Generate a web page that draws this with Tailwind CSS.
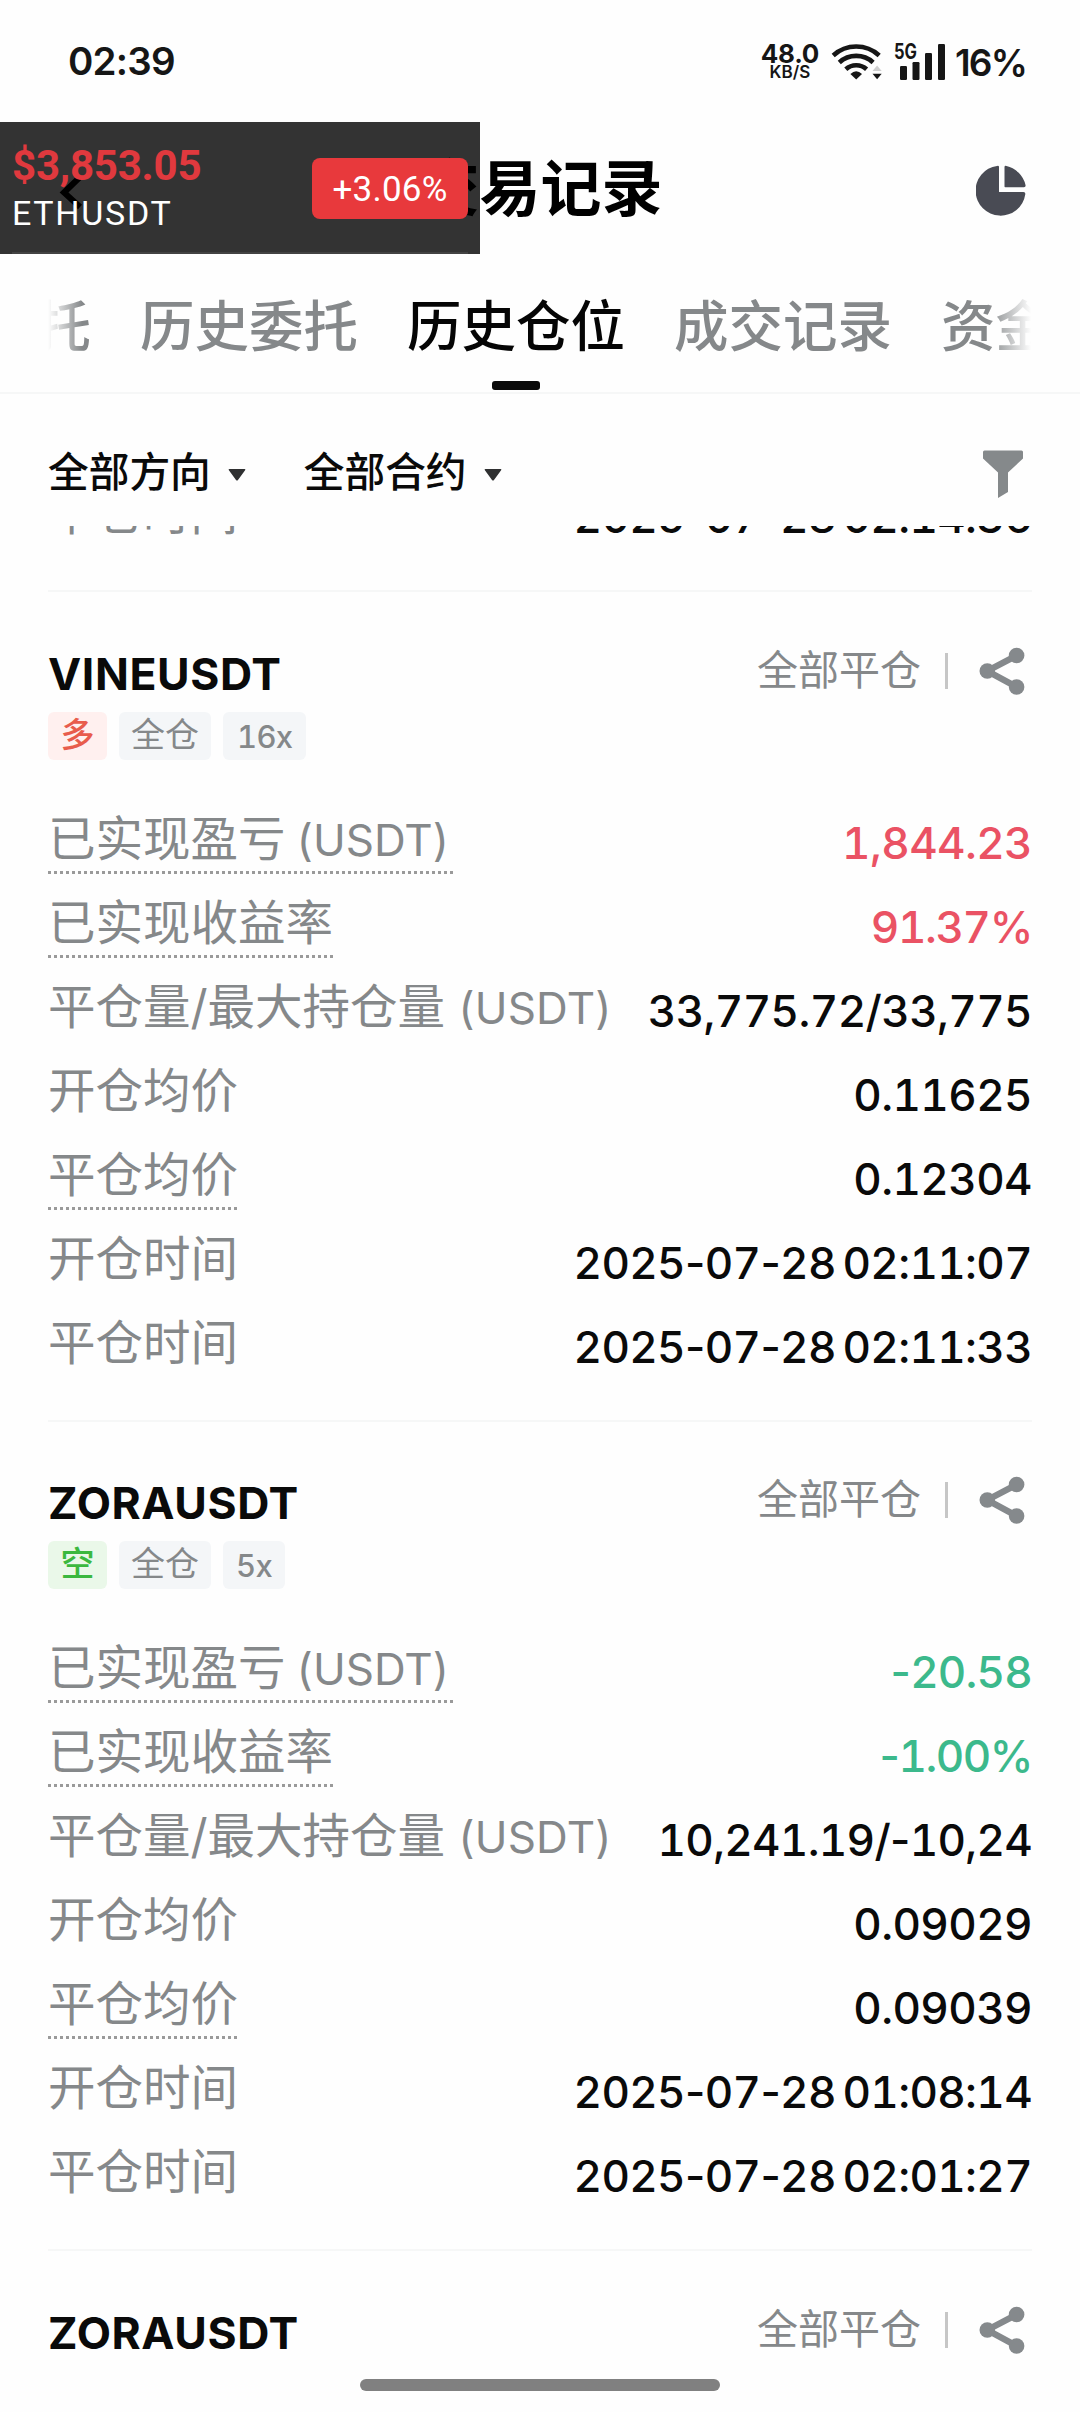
<!DOCTYPE html>
<html lang="zh-CN">
<head>
<meta charset="utf-8">
<title>交易记录</title>
<script src="https://cdn.jsdelivr.net/npm/@tailwindcss/browser@4"></script>
</head>
<body class="bg-white">
<div class="relative flex h-[2412px] w-[1080px] flex-col overflow-hidden bg-[#fefefe] font-['Inter','Noto_Sans_CJK_SC',sans-serif] text-[#0a0a0a]">

  <!-- Status bar -->
  <header class="flex h-[122px] shrink-0 items-start justify-between pl-[68px] pr-[54px] text-[#161616]">
    <span class="mt-[37px] text-[38.5px] leading-[48px] font-semibold tracking-[-0.8px]">02:39</span>
    <div class="flex">
      <div class="mt-[41px] flex w-[60px] flex-col items-center">
        <span class="text-[26px] leading-[26px] font-bold tracking-[-0.3px]">48.0</span>
        <span class="text-[17px] leading-[11px] font-semibold">KB/S</span>
      </div>
      <svg class="mt-[42px] ml-[11px] h-[40px] w-[54px]" viewBox="0 0 54 40" fill="none" stroke="#161616" stroke-width="4.6">
        <path d="M2.2 13.500a34 34 0 0 1 46 0"/>
        <path d="M8.3 20.500a25 25 0 0 1 33.800 0"/>
        <path d="M14.8 27.200a15.500 15.500 0 0 1 20.800 0"/>
        <path d="M25.200 37.500l-5.800-5.600q5.800-5.200 11.600 0z" fill="#161616" stroke="none"/>
        <path d="M41.500 29l4.600-5.500 4.600 5.500z" fill="#cfcfcf" stroke="none"/>
        <path d="M41.500 31.800h9.200l-4.600 5.500z" fill="#161616" stroke="none"/>
      </svg>
      <svg class="mt-[42px] ml-[8px] h-[40px] w-[54px]" viewBox="0 0 54 40" fill="#161616">
        <text x="1" y="17.300" font-size="21" font-weight="700" font-family="Inter" textLength="23" lengthAdjust="spacingAndGlyphs">5G</text>
        <rect x="7" y="24" width="7" height="14" rx="1.200"/>
        <rect x="19.500" y="20" width="7" height="18" rx="1.200"/>
        <rect x="32" y="11" width="7" height="27" rx="1.200"/>
        <rect x="45" y="2" width="7" height="36" rx="1.200"/>
      </svg>
      <span class="mt-[39px] ml-[8px] text-[37px] leading-[48px] font-semibold tracking-[-1.8px]">16%</span>
    </div>
  </header>

  <!-- Title bar with the floating price ticker -->
  <div class="relative flex h-[132px] shrink-0 items-center justify-between pr-[52px] pl-[58px]">
    <svg class="mt-[10px] h-[36px] w-[26px]" viewBox="0 0 26 36" fill="none" stroke="#000" stroke-width="6"><path d="M22 2L6 17.500 22 32"/></svg>
    <h1 class="mt-[2px] ml-[21px] text-[61px] leading-[80px] font-bold text-black">交易记录</h1>
    <svg class="mt-[3px] h-[52px] w-[52px]" viewBox="0 0 52 52" fill="#494b54">
      <path d="M21 1.900Q23 1.300 23 3V27.500Q23 28 23.500 28H47.500Q49.600 28 49.300 30.200A25 25 0 1 1 21 1.900z"/>
      <path d="M28.500 3.200Q28.500 1.300 30.500 2A25.500 25.500 0 0 1 49.500 21Q50 23.300 48 23.300H29.300Q28.500 23.300 28.500 22.500z"/>
    </svg>
    <div class="absolute top-0 left-0 flex h-[132px] w-[480px] items-center justify-between bg-black/80 pr-[12px] pl-[12px] font-[Roboto,sans-serif]">
      <div class="flex flex-col">
        <span class="mt-[-2px] text-[42px] leading-[50px] font-bold tracking-[-0.2px] text-[#e0393e]">$3,853.05</span>
        <span class="mt-[2px] text-[34px] leading-[40px] tracking-[1.700px] text-white">ETHUSDT</span>
      </div>
      <span class="flex h-[61px] w-[156px] items-center justify-center rounded-lg bg-[#e8393c] pt-[5px] text-[35px] tracking-[0.200px] text-white">+3.06%</span>
      <div class="absolute right-[12px] bottom-0 left-[12px] h-[2px] bg-white/8"></div>
    </div>
  </div>

  <!-- Tabs -->
  <nav class="relative h-[140px] shrink-0 border-b-2 border-[#f6f7f7]">
    <div class="mx-[48px] flex h-[138px] gap-[49px] overflow-hidden text-[54.500px] leading-[54px] font-medium whitespace-nowrap text-[#85888a]">
      <span class="mt-[45px] ml-[-175px]">当前委托</span>
      <span class="mt-[45px]">历史委托</span>
      <span class="flex flex-col items-center pt-[45px] text-[#050505]">历史仓位<span class="mt-[28px] h-[9px] w-[48px] rounded-[3px] bg-[#0a0a0a]"></span></span>
      <span class="mt-[45px]">成交记录</span>
      <span class="mt-[45px]">资金流水</span>
    </div>
    <div class="absolute top-0 left-[48px] h-[120px] w-[34px] bg-gradient-to-r from-[#fefefe] to-[#fefefe]/0"></div>
    <div class="absolute top-0 right-[44px] h-[120px] w-[48px] bg-gradient-to-l from-[#fefefe] from-10% to-[#fefefe]/0"></div>
  </nav>

  <!-- Filters -->
  <div class="flex h-[132px] shrink-0 items-center justify-between pr-[56px] pl-[48px]">
    <div class="flex gap-[58px] text-[40.700px] leading-[44px] font-medium">
      <div class="flex items-center gap-[17px]"><span class="mt-[26px] h-[44px]">全部方向</span><svg class="mt-[29px] h-[12px] w-[18px]" viewBox="0 0 18 12" fill="#2f3031"><path d="M1.500 0h15q1.500 0 .6 1.200L10 11Q9 12 8 11L.9 1.200Q0 0 1.500 0z"/></svg></div>
      <div class="flex items-center gap-[17px]"><span class="mt-[26px] h-[44px]">全部合约</span><svg class="mt-[29px] h-[12px] w-[18px]" viewBox="0 0 18 12" fill="#2f3031"><path d="M1.500 0h15q1.500 0 .6 1.200L10 11Q9 12 8 11L.9 1.200Q0 0 1.500 0z"/></svg></div>
    </div>
    <svg class="mt-[28px] h-[48px] w-[42px]" viewBox="0 0 42 48" fill="#85898b"><path d="M2.500.5h37q1.500 0 1.500 1.500v6.500L26 22.500v19.500l-10 6v-25.500L1 8.500V2Q1 .5 2.500.5z"/></svg>
  </div>

  <!-- Position history -->
  <main class="flex-1 overflow-hidden px-[48px]">
    <div class="mt-[-51px] flex h-[84px] items-center justify-between">
      <span class="h-[78px] text-[47.500px] leading-[70px] text-[#85888a]">平仓时间</span>
      <span class="text-[44px] font-medium tracking-[-0.650px] tabular-nums [word-spacing:-4.500px]">2025<span class="normal-nums">-</span>07<span class="normal-nums">-</span>28 02:14:36</span>
    </div>

    <section class="mt-[31px] h-[830px] border-t-2 border-[#f6f7f7] pt-[60px]">
      <div class="flex h-[60px] justify-between">
        <h2 class="text-[44.500px] leading-[45px] font-bold tracking-[0.600px]">VINEUSDT</h2>
        <div class="flex h-[38px] items-center text-[41px] leading-[38px] text-[#85888a]">
          <span class="mt-[-3px]">全部平仓</span>
          <span class="ml-[24px] h-[36px] w-[3px] bg-[#c6c6c6]"></span>
          <svg class="mr-[5px] ml-[29px] h-[50px] w-[50px]" viewBox="0 0 50 50" fill="#85898c" stroke="#85898c"><path d="M39.600 9.500L10.300 25l29.300 16" fill="none" stroke-width="6.500"/><g stroke="none"><circle cx="39.600" cy="9.500" r="7.800"/><circle cx="10.300" cy="25" r="7.800"/><circle cx="39.600" cy="41" r="7.800"/></g></svg>
        </div>
      </div>
      <div class="mb-[41px] flex h-[48px] gap-[12px] text-[34px] leading-[46px] text-[#85888a]">
        <span class="rounded-md bg-[#fff0ef] px-[12.500px] font-medium text-[#e85c4c]">多</span>
        <span class="rounded-md bg-[#f4f6f8] px-[12px]">全仓</span>
        <span class="rounded-md bg-[#f4f6f8] px-[14px] text-[31px] leading-[49px] font-medium tracking-[-0.700px] tabular-nums">16x</span>
      </div>
      <div class="flex h-[84px] items-center justify-between">
        <span class="h-[78px] bg-[repeating-linear-gradient(90deg,#9a9a9a_0_3px,transparent_3px_6px)] bg-[length:100%_3px] bg-[position:0_67px] bg-no-repeat pr-[5px] text-[47.500px] leading-[70px] text-[#85888a] [word-spacing:-2px]">已实现盈亏 <span class="text-[44px]">(USDT)</span></span>
        <span class="text-[44px] font-medium tracking-[-0.600px] text-[#ea5264] tabular-nums">1,844.23</span>
      </div>
      <div class="flex h-[84px] items-center justify-between">
        <span class="h-[78px] bg-[repeating-linear-gradient(90deg,#9a9a9a_0_3px,transparent_3px_6px)] bg-[length:100%_3px] bg-[position:0_67px] bg-no-repeat text-[47.500px] leading-[70px] text-[#85888a]">已实现收益率</span>
        <span class="text-[44px] font-medium tracking-[-1.400px] text-[#ea5264] tabular-nums">91.37%</span>
      </div>
      <div class="flex h-[84px] items-center justify-between">
        <span class="h-[78px] text-[47.500px] leading-[70px] text-[#85888a]">平仓量/最大持仓量 <span class="text-[44px] tracking-[0.200px]">(USDT)</span></span>
        <span class="text-[44px] font-medium tracking-[-0.600px] tabular-nums">33,775.72/33,775</span>
      </div>
      <div class="flex h-[84px] items-center justify-between">
        <span class="h-[78px] text-[47.500px] leading-[70px] text-[#85888a]">开仓均价</span>
        <span class="text-[44px] font-medium tracking-[-0.600px] tabular-nums">0.11625</span>
      </div>
      <div class="flex h-[84px] items-center justify-between">
        <span class="h-[78px] bg-[repeating-linear-gradient(90deg,#9a9a9a_0_3px,transparent_3px_6px)] bg-[length:100%_3px] bg-[position:0_67px] bg-no-repeat text-[47.500px] leading-[70px] text-[#85888a]">平仓均价</span>
        <span class="text-[44px] font-medium tracking-[-0.600px] tabular-nums">0.12304</span>
      </div>
      <div class="flex h-[84px] items-center justify-between">
        <span class="h-[78px] text-[47.500px] leading-[70px] text-[#85888a]">开仓时间</span>
        <span class="text-[44px] font-medium tracking-[-0.650px] tabular-nums [word-spacing:-4.500px]">2025<span class="normal-nums">-</span>07<span class="normal-nums">-</span>28 02:11:07</span>
      </div>
      <div class="flex h-[84px] items-center justify-between">
        <span class="h-[78px] text-[47.500px] leading-[70px] text-[#85888a]">平仓时间</span>
        <span class="text-[44px] font-medium tracking-[-0.650px] tabular-nums [word-spacing:-4.500px]">2025<span class="normal-nums">-</span>07<span class="normal-nums">-</span>28 02:11:33</span>
      </div>
    </section>

    <section class="h-[829px] border-t-2 border-[#f6f7f7] pt-[59px]">
      <div class="flex h-[60px] justify-between">
        <h2 class="text-[44.500px] leading-[45px] font-bold tracking-[0.600px]">ZORAUSDT</h2>
        <div class="flex h-[38px] items-center text-[41px] leading-[38px] text-[#85888a]">
          <span class="mt-[-3px]">全部平仓</span>
          <span class="ml-[24px] h-[36px] w-[3px] bg-[#c6c6c6]"></span>
          <svg class="mr-[5px] ml-[29px] h-[50px] w-[50px]" viewBox="0 0 50 50" fill="#85898c" stroke="#85898c"><path d="M39.600 9.500L10.300 25l29.300 16" fill="none" stroke-width="6.500"/><g stroke="none"><circle cx="39.600" cy="9.500" r="7.800"/><circle cx="10.300" cy="25" r="7.800"/><circle cx="39.600" cy="41" r="7.800"/></g></svg>
        </div>
      </div>
      <div class="mb-[41px] flex h-[48px] gap-[12px] text-[34px] leading-[46px] text-[#85888a]">
        <span class="rounded-md bg-[#eaf8e9] px-[12.500px] font-medium text-[#3bb83f]">空</span>
        <span class="rounded-md bg-[#f4f6f8] px-[12px]">全仓</span>
        <span class="rounded-md bg-[#f4f6f8] px-[13px] text-[31px] leading-[49px] font-medium tracking-[-0.700px] tabular-nums">5x</span>
      </div>
      <div class="flex h-[84px] items-center justify-between">
        <span class="h-[78px] bg-[repeating-linear-gradient(90deg,#9a9a9a_0_3px,transparent_3px_6px)] bg-[length:100%_3px] bg-[position:0_67px] bg-no-repeat pr-[5px] text-[47.500px] leading-[70px] text-[#85888a] [word-spacing:-2px]">已实现盈亏 <span class="text-[44px]">(USDT)</span></span>
        <span class="text-[44px] font-medium tracking-[-0.800px] text-[#3cb98c] tabular-nums"><span class="normal-nums">-</span>20.58</span>
      </div>
      <div class="flex h-[84px] items-center justify-between">
        <span class="h-[78px] bg-[repeating-linear-gradient(90deg,#9a9a9a_0_3px,transparent_3px_6px)] bg-[length:100%_3px] bg-[position:0_67px] bg-no-repeat text-[47.500px] leading-[70px] text-[#85888a]">已实现收益率</span>
        <span class="text-[44px] font-medium tracking-[-1.500px] text-[#3cb98c] tabular-nums"><span class="normal-nums">-</span>1.00%</span>
      </div>
      <div class="flex h-[84px] items-center justify-between">
        <span class="h-[78px] text-[47.500px] leading-[70px] text-[#85888a]">平仓量/最大持仓量 <span class="text-[44px] tracking-[0.200px]">(USDT)</span></span>
        <span class="text-[44px] font-medium tracking-[-0.700px] tabular-nums">10,241.19/<span class="normal-nums">-</span>10,24</span>
      </div>
      <div class="flex h-[84px] items-center justify-between">
        <span class="h-[78px] text-[47.500px] leading-[70px] text-[#85888a]">开仓均价</span>
        <span class="text-[44px] font-medium tracking-[-0.600px] tabular-nums">0.09029</span>
      </div>
      <div class="flex h-[84px] items-center justify-between">
        <span class="h-[78px] bg-[repeating-linear-gradient(90deg,#9a9a9a_0_3px,transparent_3px_6px)] bg-[length:100%_3px] bg-[position:0_67px] bg-no-repeat text-[47.500px] leading-[70px] text-[#85888a]">平仓均价</span>
        <span class="text-[44px] font-medium tracking-[-0.600px] tabular-nums">0.09039</span>
      </div>
      <div class="flex h-[84px] items-center justify-between">
        <span class="h-[78px] text-[47.500px] leading-[70px] text-[#85888a]">开仓时间</span>
        <span class="text-[44px] font-medium tracking-[-0.650px] tabular-nums [word-spacing:-4.500px]">2025<span class="normal-nums">-</span>07<span class="normal-nums">-</span>28 01:08:14</span>
      </div>
      <div class="flex h-[84px] items-center justify-between">
        <span class="h-[78px] text-[47.500px] leading-[70px] text-[#85888a]">平仓时间</span>
        <span class="text-[44px] font-medium tracking-[-0.650px] tabular-nums [word-spacing:-4.500px]">2025<span class="normal-nums">-</span>07<span class="normal-nums">-</span>28 02:01:27</span>
      </div>
    </section>

    <section class="border-t-2 border-[#f6f7f7] pt-[60px]">
      <div class="flex h-[60px] justify-between">
        <h2 class="text-[44.500px] leading-[45px] font-bold tracking-[0.600px]">ZORAUSDT</h2>
        <div class="flex h-[38px] items-center text-[41px] leading-[38px] text-[#85888a]">
          <span class="mt-[-3px]">全部平仓</span>
          <span class="ml-[24px] h-[36px] w-[3px] bg-[#c6c6c6]"></span>
          <svg class="mr-[5px] ml-[29px] h-[50px] w-[50px]" viewBox="0 0 50 50" fill="#85898c" stroke="#85898c"><path d="M39.600 9.500L10.300 25l29.300 16" fill="none" stroke-width="6.500"/><g stroke="none"><circle cx="39.600" cy="9.500" r="7.800"/><circle cx="10.300" cy="25" r="7.800"/><circle cx="39.600" cy="41" r="7.800"/></g></svg>
        </div>
      </div>
    </section>
  </main>

  <!-- Home indicator -->
  <div class="absolute bottom-[21px] left-[360px] h-[12px] w-[360px] rounded-full bg-[#808080]"></div>
</div>
</body>
</html>
